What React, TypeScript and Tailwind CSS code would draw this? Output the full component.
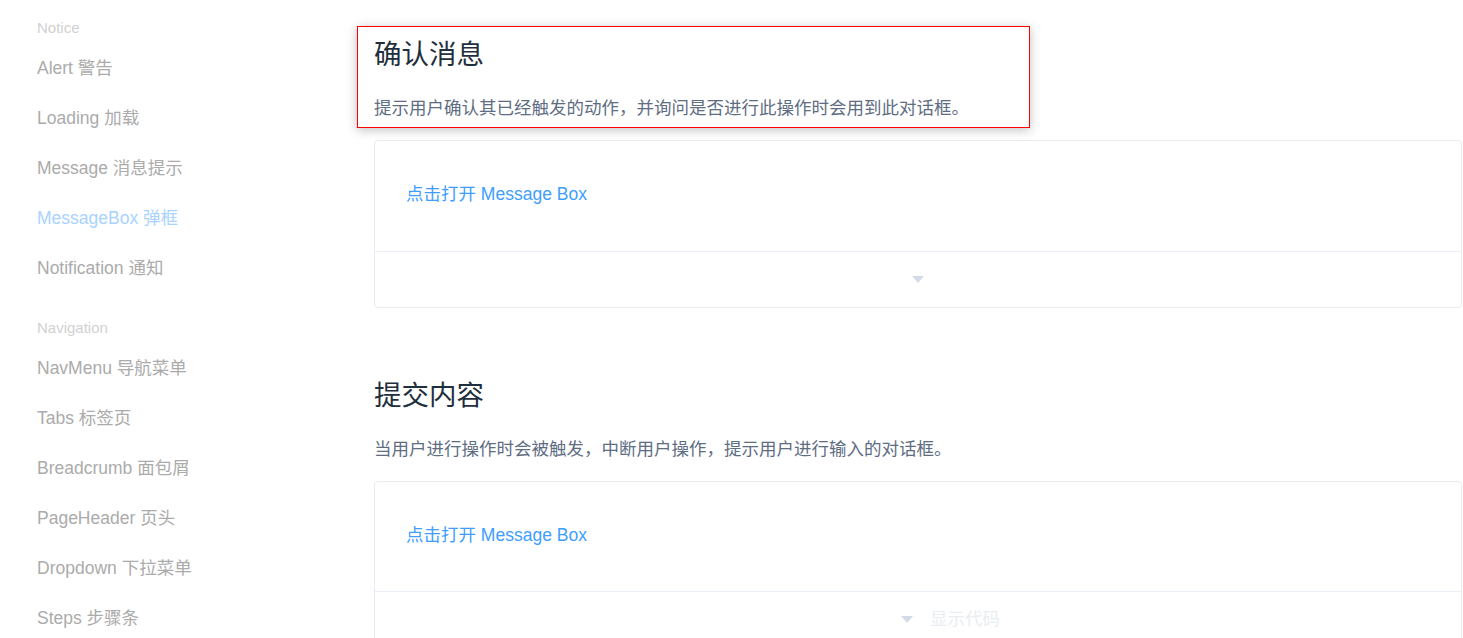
const groups = [
  {
    title: "Notice",
    items: ["Alert 警告", "Loading 加载", "Message 消息提示", "MessageBox 弹框", "Notification 通知"],
  },
  {
    title: "Navigation",
    items: ["NavMenu 导航菜单", "Tabs 标签页", "Breadcrumb 面包屑", "PageHeader 页头", "Dropdown 下拉菜单", "Steps 步骤条"],
  },
]

const Caret = () => (
  <svg width="12" height="7" viewBox="0 0 12 7">
    <path d="M0 0 L12 0 L6 7 Z" fill="#d3dce6" />
  </svg>
)

const DemoCard = ({ hover }: { hover?: boolean }) => {
  return (
    <div className="border border-[#ebebeb] rounded-[4px] mb-[19px]">
      <div className="px-[31px] pt-[30px] pb-[32px]">
        <button className="py-[15px] text-[17.5px] leading-none text-[#409eff]">点击打开 Message Box</button>
      </div>
      {hover ? (
        <div className="h-[56px] border-t border-[#eaeefb] flex items-center justify-center gap-[17px] pl-[65px]">
          <Caret />
          <span className="text-[17.5px] text-[#d3dce6] opacity-50">显示代码</span>
        </div>
      ) : (
        <div className="h-[56px] border-t border-[#eaeefb] flex items-center justify-center">
          <Caret />
        </div>
      )}
    </div>
  )
}

export default function App() {
  return (
    <div
      className="h-screen w-full overflow-hidden bg-white flex"
      style={{ fontFamily: '"Liberation Sans", Arial, "Noto Sans CJK SC", sans-serif' }}
    >
      <aside className="w-[374px] shrink-0 pl-[37px] pt-[13px]">
        {groups.map((g, gi) => (
          <div key={g.title} className={gi > 0 ? "mt-[20px]" : ""}>
            <div className="h-[30px] leading-[30px] text-[15px] text-[#d1d1d1]">{g.title}</div>
            <ul>
              {g.items.map((item) => (
                <li
                  key={item}
                  className={
                    "h-[50px] leading-[50px] text-[17.5px] " +
                    (item === "MessageBox 弹框" ? "text-[#a9d3ff]" : "text-[#ababab]")
                  }
                >
                  {item}
                </li>
              ))}
            </ul>
          </div>
        ))}
      </aside>

      <main className="flex-1 pr-px">
        <div className="relative mt-[34px]">
          <div className="absolute -left-[17px] -top-[8px] w-[673px] -bottom-[7px] border border-[#ff0000] shadow-[0_2px_10px_rgba(0,0,0,0.25)]" />
          <h3 className="relative text-[27.5px] leading-[41px] text-[#1f2f3d] mb-[20px]">确认消息</h3>
          <p className="relative text-[17.5px] leading-[26px] text-[#5e6d82]">
            提示用户确认其已经触发的动作，并询问是否进行此操作时会用到此对话框。
          </p>
        </div>
        <div className="mt-[19px]">
          <DemoCard />
        </div>

        <h3 className="text-[27.5px] leading-[41px] text-[#1f2f3d] mt-[67px] mb-[20px]">提交内容</h3>
        <p className="text-[17.5px] leading-[26px] text-[#5e6d82] mb-[19px]">
          当用户进行操作时会被触发，中断用户操作，提示用户进行输入的对话框。
        </p>
        <DemoCard hover />
      </main>
    </div>
  )
}
